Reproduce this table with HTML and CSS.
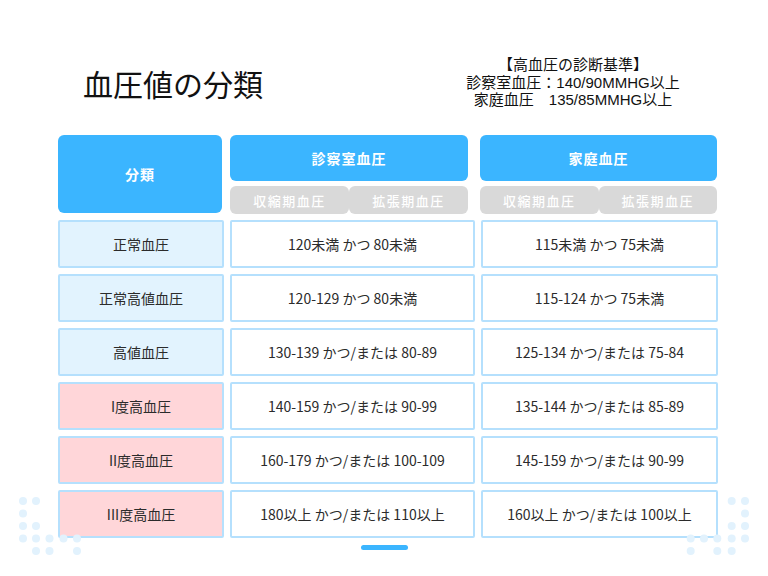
FILE: index.html
```html
<!DOCTYPE html>
<html lang="ja">
<head>
<meta charset="utf-8">
<title>血圧値の分類</title>
<link rel="stylesheet" href="styles.css">
</head>
<body>
<div class="page">
  <div class="top">
    <h1 class="title">血圧値の分類</h1>
    <div class="info">
      <div>【高血圧の診断基準】</div>
      <div>診察室血圧：140/90MMHG以上</div>
      <div>家庭血圧　135/85MMHG以上</div>
    </div>
  </div>

  <div class="head">
    <div class="head-cat">分類</div>
    <div class="head-col col-a">
      <div class="head-main">診察室血圧</div>
      <div class="head-sub"><span>収縮期血圧</span><span>拡張期血圧</span></div>
    </div>
    <div class="head-col col-b">
      <div class="head-main">家庭血圧</div>
      <div class="head-sub"><span>収縮期血圧</span><span>拡張期血圧</span></div>
    </div>
  </div>

  <div class="rows">
    <div class="cell cat">正常血圧</div>
    <div class="cell">120未満 かつ 80未満</div>
    <div class="cell">115未満 かつ 75未満</div>

    <div class="cell cat">正常高値血圧</div>
    <div class="cell">120-129 かつ 80未満</div>
    <div class="cell">115-124 かつ 75未満</div>

    <div class="cell cat">高値血圧</div>
    <div class="cell">130-139 かつ/または 80-89</div>
    <div class="cell">125-134 かつ/または 75-84</div>

    <div class="cell cat hyper">I度高血圧</div>
    <div class="cell">140-159 かつ/または 90-99</div>
    <div class="cell">135-144 かつ/または 85-89</div>

    <div class="cell cat hyper">II度高血圧</div>
    <div class="cell">160-179 かつ/または 100-109</div>
    <div class="cell">145-159 かつ/または 90-99</div>

    <div class="cell cat hyper">III度高血圧</div>
    <div class="cell">180以上 かつ/または 110以上</div>
    <div class="cell">160以上 かつ/または 100以上</div>
  </div>

  <div class="pager"><span class="pager-bar"></span></div>

  <svg class="dots dots-left" width="90" height="60" viewBox="0 0 90 60" aria-hidden="true">
    <g fill="#e2f2fd">
      <circle cx="23" cy="5" r="4"/><circle cx="36" cy="5" r="4"/>
      <circle cx="23" cy="17.5" r="4"/>
      <circle cx="23" cy="30" r="4"/><circle cx="36" cy="30" r="4"/>
      <circle cx="23" cy="42.5" r="4"/><circle cx="36" cy="42.5" r="4"/><circle cx="49.5" cy="42.5" r="4"/><circle cx="63.5" cy="42.5" r="4"/><circle cx="77" cy="42.5" r="4"/>
      <circle cx="36" cy="55" r="4"/><circle cx="49.5" cy="55" r="4"/><circle cx="77" cy="55" r="4"/>
    </g>
  </svg>
  <svg class="dots dots-right" width="80" height="60" viewBox="0 0 80 60" aria-hidden="true">
    <g fill="#e2f2fd">
      <circle cx="51.7" cy="5" r="4"/><circle cx="65" cy="5" r="4"/>
      <circle cx="65" cy="17.5" r="4"/>
      <circle cx="51.7" cy="30" r="4"/><circle cx="65" cy="30" r="4"/>
      <circle cx="10.7" cy="42.5" r="4"/><circle cx="24" cy="42.5" r="4"/><circle cx="37.3" cy="42.5" r="4"/><circle cx="51.7" cy="42.5" r="4"/><circle cx="65" cy="42.5" r="4"/>
      <circle cx="10.7" cy="55" r="4"/><circle cx="37.3" cy="55" r="4"/><circle cx="51.7" cy="55" r="4"/>
    </g>
  </svg>
</div>
</body>
</html>
```

FILE: styles.css
```css
html, body {
  margin: 0;
  padding: 0;
  background: #ffffff;
}

body {
  font-family: "Noto Sans CJK JP", "Noto Sans", sans-serif;
  color: #333333;
}

.page {
  position: relative;
  width: 768px;
  height: 576px;
  overflow: hidden;
}

.top {
  display: flex;
  align-items: flex-start;
  height: 135px;
  box-sizing: border-box;
  padding: 56px 0 0 83px;
}

.title {
  margin: 9px 0 0 0;
  font-size: 30px;
  line-height: 36px;
  font-weight: 400;
  color: #111111;
  letter-spacing: 0;
}

.info {
  margin-left: auto;
  margin-right: 85px;
  width: 220px;
  text-align: center;
  font-family: "Liberation Sans", "Noto Sans CJK JP", sans-serif;
  font-size: 15px;
  line-height: 17.5px;
  color: #111111;
}

.head {
  display: flex;
  margin-left: 58px;
  height: 79px;
}

.head-cat {
  width: 164px;
  height: 78px;
  background: #3bb5ff;
  border-radius: 6px;
  color: #ffffff;
  font-weight: 700;
  font-size: 14px;
  letter-spacing: 1px;
  display: flex;
  align-items: center;
  justify-content: center;
}

.head-col {
  display: flex;
  flex-direction: column;
  gap: 5px;
}

.col-a {
  width: 238px;
  margin-left: 8px;
}

.col-b {
  width: 237px;
  margin-left: 12px;
}

.head-main {
  height: 46px;
  background: #3bb5ff;
  border-radius: 6px;
  color: #ffffff;
  font-weight: 700;
  font-size: 14px;
  letter-spacing: 1px;
  display: flex;
  align-items: center;
  justify-content: center;
}

.head-sub {
  display: flex;
  height: 28px;
}

.head-sub span {
  flex: 1;
  background: #d9d9d9;
  border-radius: 6px;
  color: #ffffff;
  font-size: 13px;
  font-weight: 500;
  letter-spacing: 1.5px;
  display: flex;
  align-items: center;
  justify-content: center;
}

.rows {
  display: grid;
  grid-template-columns: 166px 245px 237px;
  grid-auto-rows: 48px;
  column-gap: 6px;
  row-gap: 6px;
  margin: 6px 0 0 58px;
}

.cell {
  box-sizing: border-box;
  border: 2px solid #b5e0fd;
  border-radius: 2px;
  background: #ffffff;
  display: flex;
  align-items: center;
  justify-content: center;
  font-size: 14px;
  color: #2b2b2b;
}

.cat {
  background: #e2f3fe;
}

.cat.hyper {
  background: #ffd6d9;
}

.pager {
  display: flex;
  justify-content: center;
  margin-top: 7px;
}

.pager-bar {
  display: block;
  width: 47px;
  height: 5px;
  border-radius: 3px;
  background: #3bb5ff;
}

.dots {
  position: absolute;
  top: 496px;
}

.dots-left {
  left: 0;
}

.dots-right {
  left: 680px;
}
```
